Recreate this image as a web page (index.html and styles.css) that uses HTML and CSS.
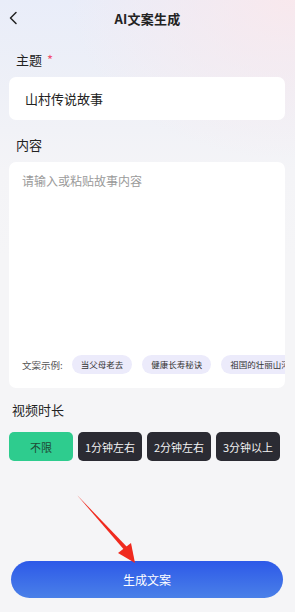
FILE: index.html
```html
<!DOCTYPE html>
<html lang="zh">
<head>
<meta charset="utf-8">
<link rel="stylesheet" href="styles.css">
</head>
<body>
<div class="page">
  <header class="topbar">
    <svg class="back" width="10" height="14" viewBox="0 0 10 14"><path d="M8 1.5 L2.5 7 L8 12.5" fill="none" stroke="#222" stroke-width="1.5" stroke-linecap="round" stroke-linejoin="round"/></svg>
    <div class="title">AI文案生成</div>
  </header>

  <div class="label label-theme">主题 <span class="req">*</span></div>
  <div class="card input">山村传说故事</div>

  <div class="label label-content">内容</div>
  <div class="card textarea">
    <div class="placeholder">请输入或粘贴故事内容</div>
    <div class="examples">
      <span class="ex-label">文案示例:</span>
      <span class="chip">当父母老去</span>
      <span class="chip">健康长寿秘诀</span>
      <span class="chip">祖国的壮丽山河</span>
    </div>
  </div>

  <div class="label label-dur">视频时长</div>
  <div class="durations">
    <div class="dur active">不限</div>
    <div class="dur">1分钟左右</div>
    <div class="dur">2分钟左右</div>
    <div class="dur">3分钟以上</div>
  </div>

  <div class="spacer"></div>
  <div class="gen">生成文案</div>

  <svg class="arrow" width="295" height="612" viewBox="0 0 295 612">
    <path d="M77 495 L129 549 L126 552 Z" fill="#f02a1e"/>
    <path d="M135 563 L118 553 L131 543 Z" fill="#f02a1e"/>
  </svg>
</div>
</body>
</html>
```

FILE: styles.css
```css
* { box-sizing: border-box; }
html, body { margin: 0; padding: 0; }
body {
  width: 295px;
  height: 612px;
  overflow: hidden;
  font-family: "Noto Sans CJK SC", "Noto Sans", sans-serif;
  color: #222;
  background: #f5f5f7;
}
.page {
  position: relative;
  height: 612px;
  display: flex;
  flex-direction: column;
  background:
    radial-gradient(ellipse 220px 160px at 290px 0px, rgba(250, 232, 236, 0.9), rgba(250, 232, 236, 0) 100%),
    linear-gradient(180deg, #e9edf9 0px, #eef0f7 90px, #f4f4f7 170px, #f5f5f7 260px);
}
.topbar {
  height: 36px;
  display: flex;
  align-items: center;
  justify-content: center;
  position: relative;
}
.back {
  position: absolute;
  left: 8px;
  top: 11px;
}
.title {
  font-size: 13px;
  font-weight: 700;
  color: #222;
  letter-spacing: 0.2px;
}
.label {
  font-size: 13px;
  line-height: 18px;
  color: #222;
  padding-left: 16px;
}
.label-theme { margin-top: 15px; }
.req { color: #f0506e; margin-left: 2px; }
.card {
  margin: 0 10px 0 9px;
  background: #fff;
  border-radius: 7px;
}
.input {
  margin-top: 8px;
  height: 43px;
  display: flex;
  align-items: center;
  padding-left: 16px;
  font-size: 13px;
  color: #222;
}
.label-content { margin-top: 16px; }
.textarea {
  margin-top: 8px;
  height: 226px;
  display: flex;
  flex-direction: column;
  padding: 11px 0 14px 13px;
  overflow: hidden;
}
.placeholder {
  font-size: 12px;
  color: #9a9a9a;
  line-height: 16px;
}
.examples {
  margin-top: auto;
  display: flex;
  align-items: center;
  white-space: nowrap;
  overflow: hidden;
}
.ex-label {
  font-size: 9.5px;
  color: #555;
  margin-right: 9px;
}
.chip {
  flex: none;
  height: 19px;
  line-height: 19px;
  padding: 0 9px;
  border-radius: 10px;
  background: #ecebfb;
  font-size: 8.5px;
  color: #333;
  margin-right: 10px;
}
.label-dur {
  margin-top: 13px;
  padding-left: 12px;
  font-size: 13px;
}
.durations {
  margin-top: 13px;
  padding-left: 9px;
  display: flex;
  gap: 5px;
}
.dur {
  width: 64px;
  height: 29px;
  border-radius: 5px;
  background: #2b2b33;
  color: #f2f2f2;
  font-size: 11px;
  display: flex;
  align-items: center;
  justify-content: center;
}
.dur.active {
  background: #2ecc8e;
  color: #1f4a35;
}
.spacer { flex: 1; }
.gen {
  margin: 0 12px 14px 11px;
  height: 37px;
  border-radius: 19px;
  background: linear-gradient(180deg, #2d59e8 0%, #4a80e8 100%);
  color: #fff;
  font-size: 12px;
  display: flex;
  align-items: center;
  justify-content: center;
}
.arrow {
  position: absolute;
  left: 0;
  top: 0;
  pointer-events: none;
}
```
